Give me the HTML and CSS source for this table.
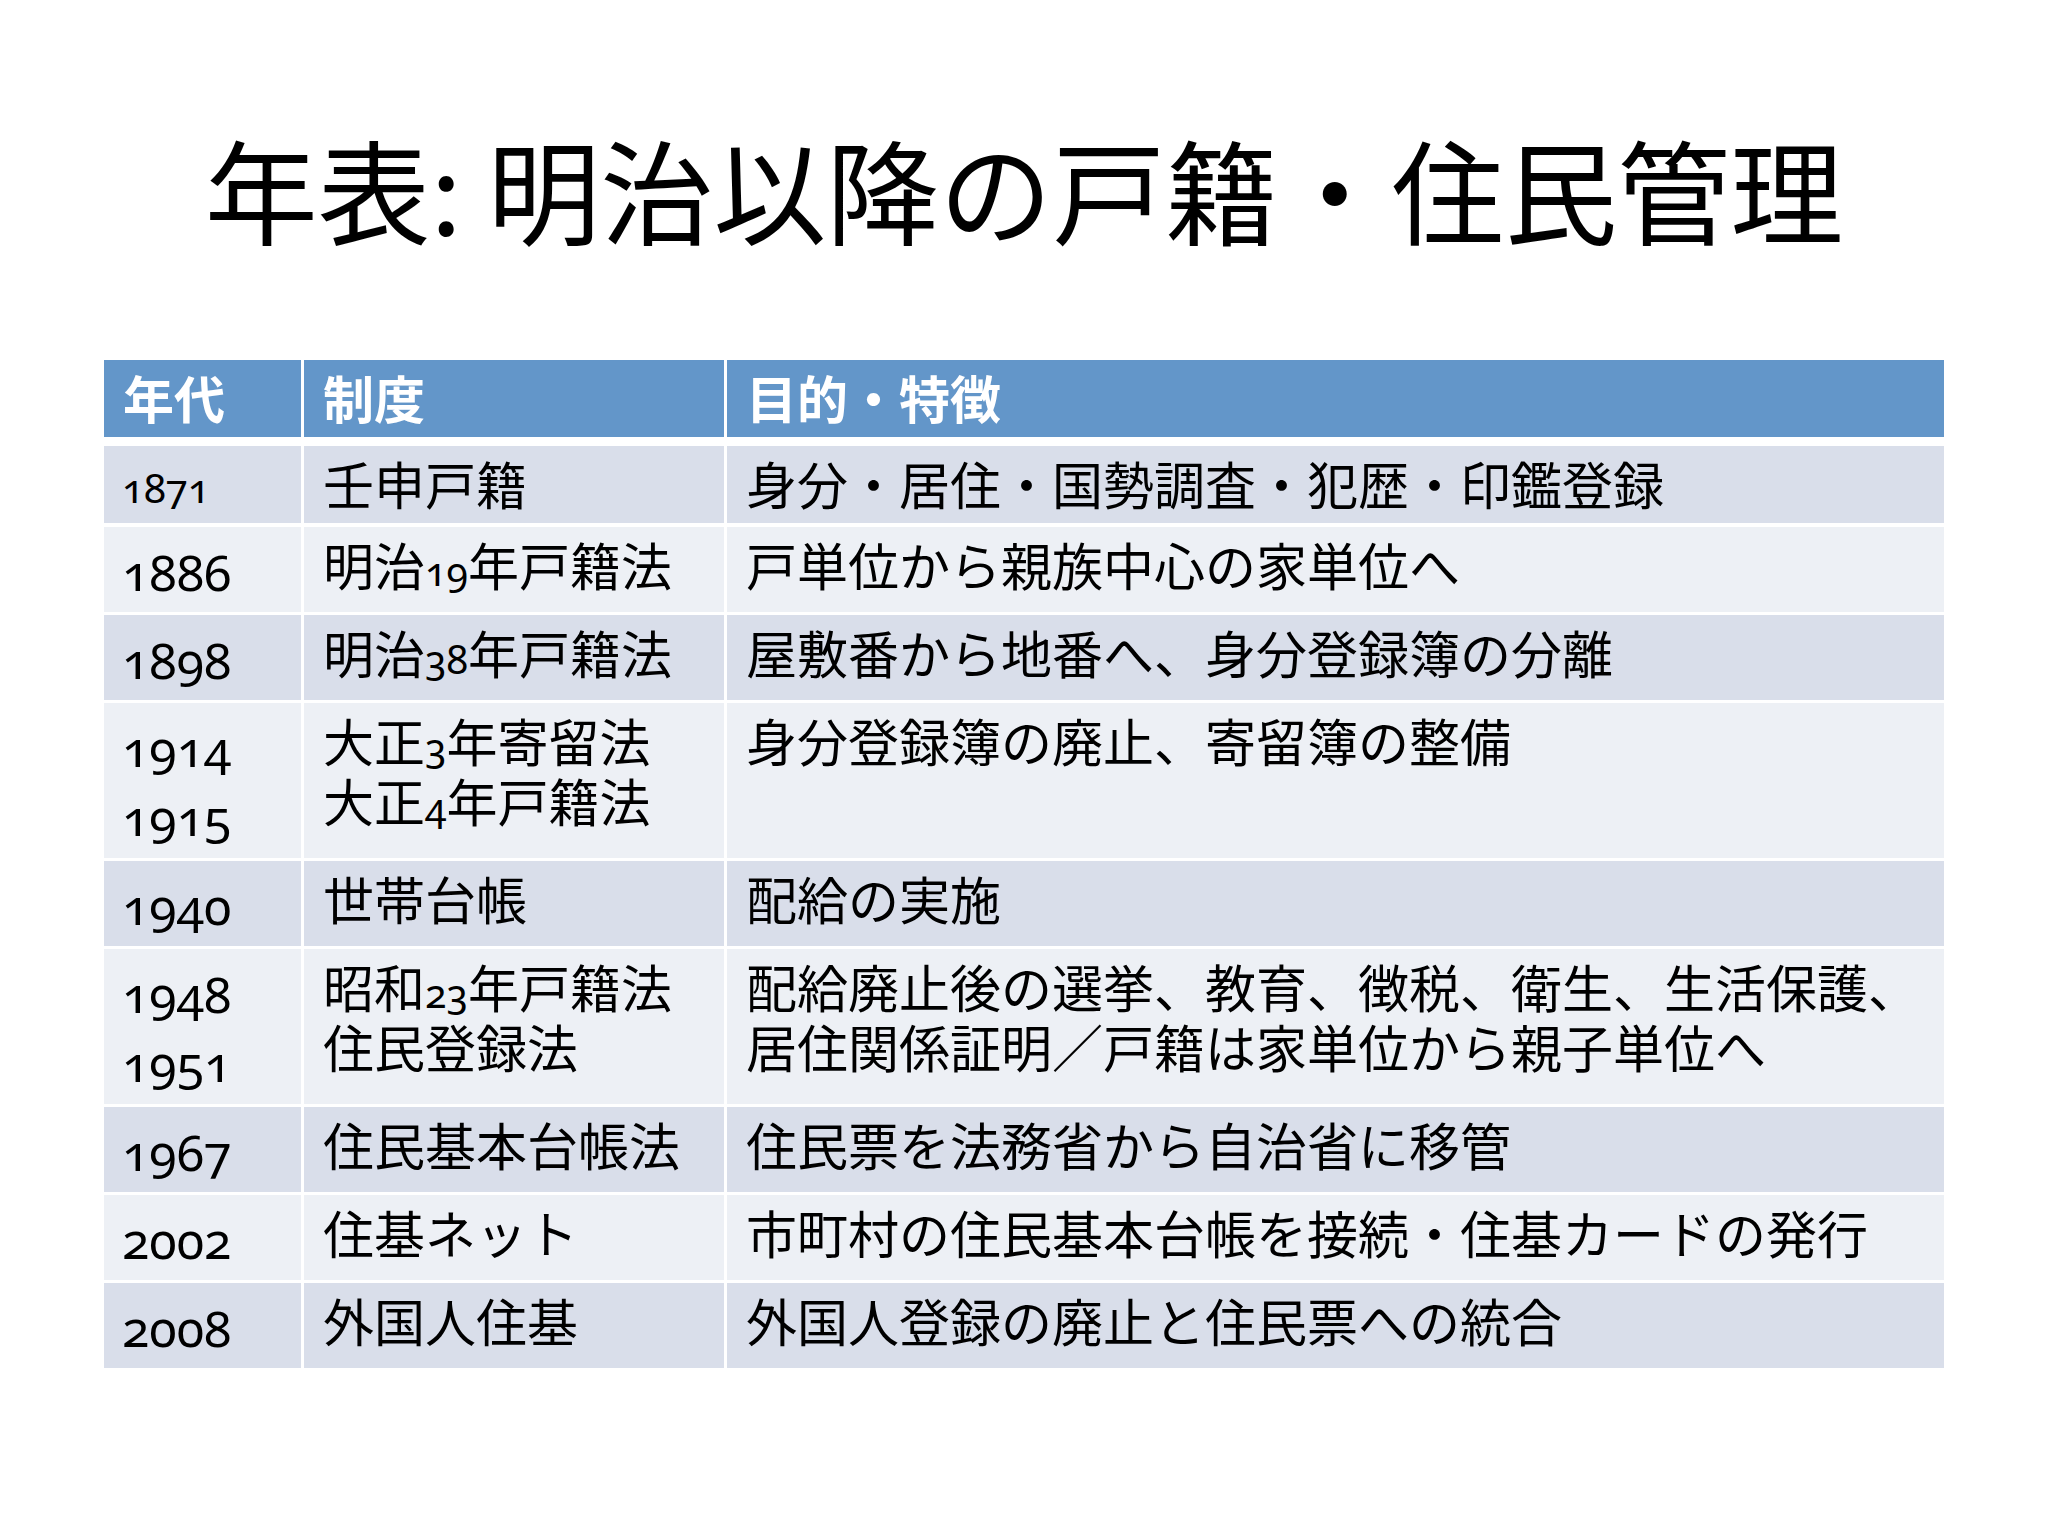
FILE: index.html
```html
<!DOCTYPE html>
<html lang="ja">
<head>
<meta charset="utf-8">
<title>年表: 明治以降の戸籍・住民管理</title>
<link rel="stylesheet" href="styles.css">
</head>
<body>
<div class="slide">
  <h1 class="title">年表: 明治以降の戸籍・住民管理</h1>
  <div class="table">
    <div class="row head">
      <div class="cell">年代</div>
      <div class="cell">制度</div>
      <div class="cell">目的・特徴</div>
    </div>
    <div class="row first band1">
      <div class="cell year small">1871</div>
      <div class="cell">壬申戸籍</div>
      <div class="cell">身分・居住・国勢調査・犯歴・印鑑登録</div>
    </div>
    <div class="row band2">
      <div class="cell year">1886</div>
      <div class="cell">明治<span class="num">19</span>年戸籍法</div>
      <div class="cell">戸単位から親族中心の家単位へ</div>
    </div>
    <div class="row band1">
      <div class="cell year">1898</div>
      <div class="cell">明治<span class="num">38</span>年戸籍法</div>
      <div class="cell">屋敷番から地番へ、身分登録簿の分離</div>
    </div>
    <div class="row tall band2">
      <div class="cell year">1914<br>1915</div>
      <div class="cell">大正<span class="num">3</span>年寄留法<br>大正<span class="num">4</span>年戸籍法</div>
      <div class="cell">身分登録簿の廃止、寄留簿の整備</div>
    </div>
    <div class="row band1">
      <div class="cell year">1940</div>
      <div class="cell">世帯台帳</div>
      <div class="cell">配給の実施</div>
    </div>
    <div class="row tall band2">
      <div class="cell year">1948<br>1951</div>
      <div class="cell">昭和<span class="num">23</span>年戸籍法<br>住民登録法</div>
      <div class="cell">配給廃止後の選挙、教育、徴税、衛生、生活保護、<br>居住関係証明／戸籍は家単位から親子単位へ</div>
    </div>
    <div class="row band1">
      <div class="cell year">1967</div>
      <div class="cell">住民基本台帳法</div>
      <div class="cell">住民票を法務省から自治省に移管</div>
    </div>
    <div class="row band2">
      <div class="cell year">2002</div>
      <div class="cell">住基ネット</div>
      <div class="cell">市町村の住民基本台帳を接続・住基カードの発行</div>
    </div>
    <div class="row band1">
      <div class="cell year">2008</div>
      <div class="cell">外国人住基</div>
      <div class="cell">外国人登録の廃止と住民票への統合</div>
    </div>
  </div>
</div>
</body>
</html>
```
FILE: styles.css
```css
html, body {
  margin: 0;
  padding: 0;
  background: #ffffff;
}

body {
  width: 2048px;
  height: 1536px;
  overflow: hidden;
  font-family: "Noto Sans CJK JP", sans-serif;
  color: #000000;
}

.slide {
  display: flex;
  flex-direction: column;
  align-items: center;
}

.title {
  margin: 0;
  padding-top: 119px;
  font-size: 113px;
  line-height: 136px;
  font-weight: 400;
  text-align: center;
  white-space: nowrap;
}

.table {
  margin-top: 105px;
  width: 1840px;
  display: flex;
  flex-direction: column;
  gap: 3px;
}

.row {
  display: grid;
  grid-template-columns: 197px 420px 1217px;
  column-gap: 3px;
  height: 85px;
}

.row.head {
  height: 77px;
  margin-bottom: 6px;
}

.row.first {
  height: 77px;
  margin-bottom: 1px;
}

.row.tall {
  height: 155px;
}

.cell {
  padding: 7px 0 0 19px;
  font-size: 51px;
  line-height: 60px;
  white-space: nowrap;
}

.head .cell {
  background: #6396c9;
  color: #ffffff;
  font-weight: 700;
}

.band1 .cell {
  background: #d9deea;
}

.band2 .cell {
  background: #edf0f5;
}

.num {
  font-family: "Noto Sans", "Noto Sans CJK JP", sans-serif;
  font-variant-numeric: oldstyle-nums;
  font-size: 0.77em;
  line-height: 1;
}

.cell.year {
  font-family: "Noto Sans", "Noto Sans CJK JP", sans-serif;
  font-variant-numeric: oldstyle-nums;
  font-size: 50px;
  line-height: 69px;
  padding-top: 11px;
  padding-left: 18px;
}

.cell.year.small {
  font-size: 40px;
  padding-top: 7px;
}
```
